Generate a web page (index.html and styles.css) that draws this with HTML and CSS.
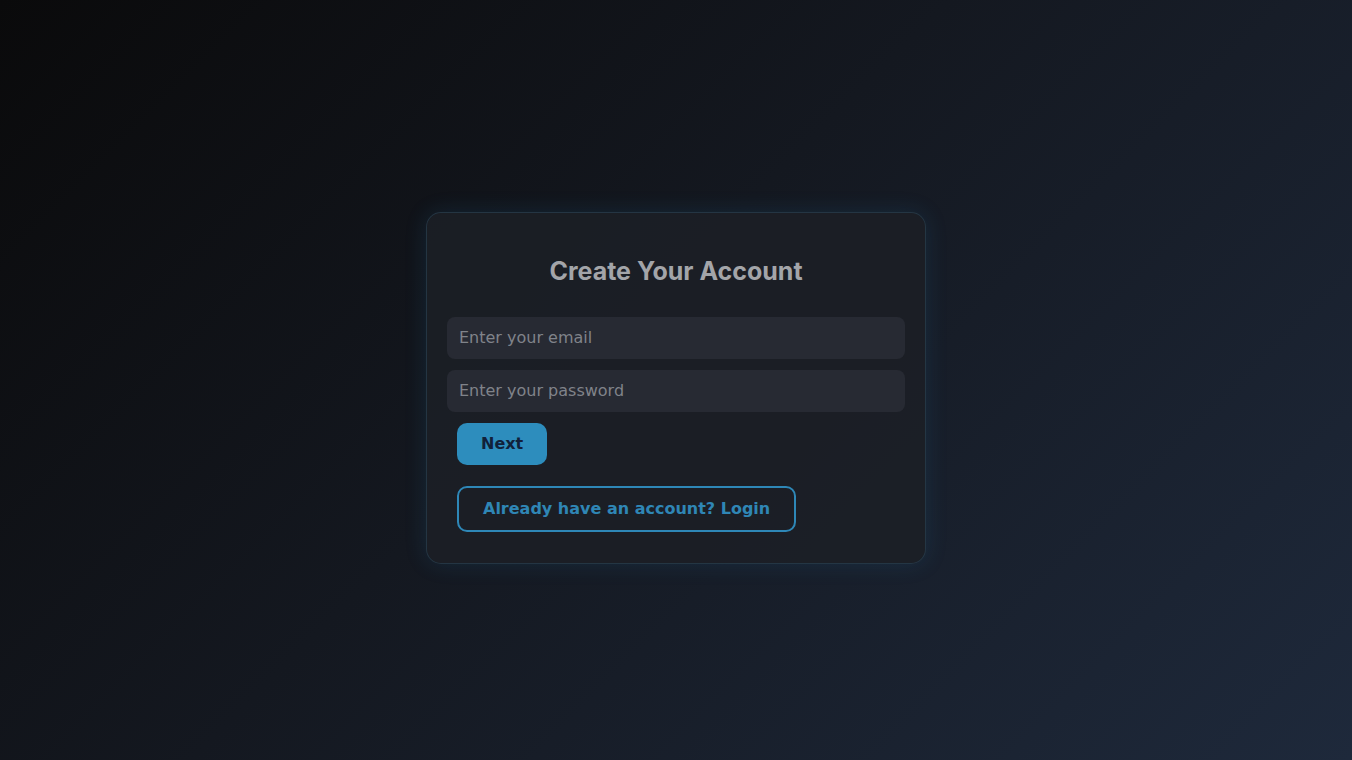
FILE: index.html
```html
<!DOCTYPE html>
<html lang="en">
<head>
<meta charset="utf-8">
<title>Create Your Account</title>
<link rel="stylesheet" href="styles.css">
</head>
<body>
<main class="page">
  <section class="card">
    <h2 class="title">Create Your Account</h2>
    <form class="form">
      <input class="field" type="email" placeholder="Enter your email">
      <input class="field" type="password" placeholder="Enter your password">
      <div class="actions">
        <button type="button" class="btn-primary">Next</button>
        <button type="button" class="btn-outline">Already have an account? Login</button>
      </div>
    </form>
  </section>
</main>
</body>
</html>
```

FILE: styles.css
```css
* { box-sizing: border-box; }
html, body { height: 100%; }
body {
  margin: 0;
  font-family: "DejaVu Sans", sans-serif;
  background: linear-gradient(135deg, #0a0a0b 0%, #141820 45%, #1e293b 100%);
}
.page {
  height: 100vh;
  display: flex;
  align-items: center;
  justify-content: center;
}
.card {
  width: 500px;
  padding: 20px;
  background: rgba(28, 31, 38, 0.9);
  border: 1px solid rgba(60, 110, 140, 0.3);
  border-radius: 15px;
  box-shadow: 0 0 22px rgba(40, 130, 190, 0.16);
  margin-top: 15px;
}
.title {
  margin: 20px 0 28px;
  text-align: center;
  font-family: "Inter", "Open Sans", sans-serif;
  font-weight: 700;
  font-size: 25px;
  line-height: 36px;
  color: #a3a5a9;
}
.form {
  display: flex;
  flex-direction: column;
  gap: 11px;
}
.field {
  width: 100%;
  height: 42px;
  padding: 0 12px;
  border: none;
  border-radius: 8px;
  background: #272a33;
  font-family: "DejaVu Sans", sans-serif;
  font-size: 16px;
  color: #c0c2c6;
  outline: none;
}
.field::placeholder { color: #80838a; }
.actions {
  display: flex;
  flex-direction: column;
  align-items: flex-start;
  gap: 21px;
  padding: 0 10px 11px;
}
.btn-primary {
  height: 42px;
  padding: 0 24px;
  border: none;
  border-radius: 10px;
  background: #2d8dbd;
  color: #11213a;
  font-family: "DejaVu Sans", sans-serif;
  font-weight: 700;
  font-size: 16px;
}
.btn-outline {
  height: 46px;
  padding: 0 24px;
  border: 2px solid #2e87b7;
  border-radius: 10px;
  background: transparent;
  color: #2f86b5;
  font-family: "DejaVu Sans", sans-serif;
  font-weight: 700;
  font-size: 16px;
}
```
